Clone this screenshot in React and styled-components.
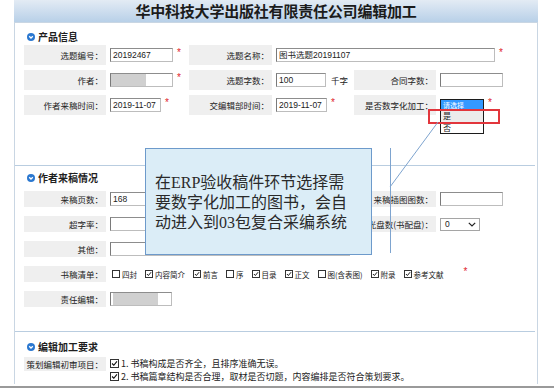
import styled, { createGlobalStyle } from "styled-components";

const CJK = `"Noto Sans CJK SC", sans-serif`;
const NUM = `"Liberation Sans", "Noto Sans CJK SC", sans-serif`;

const GlobalStyle = createGlobalStyle`
  html, body { margin: 0; padding: 0; background: #fff; }
  body { font-family: ${CJK}; color: #222; }
`;

function Dot() {
  return (
    <DotIcon viewBox="0 0 8 8">
      <circle cx="4" cy="4" r="4" fill="#2b78d0" />
      <path d="M2.2 3.3 L4 5 L5.8 3.3" stroke="#fff" strokeWidth="1.3" fill="none" />
    </DotIcon>
  );
}

function Check({ on, size = 8 }) {
  return (
    <Box $size={size}>
      {on && (
        <svg viewBox="0 0 8 8" width={size - 2} height={size - 2}>
          <path d="M1.2 4 L3.2 6 L6.8 1.6" stroke="#111" strokeWidth="1.3" fill="none" />
        </svg>
      )}
    </Box>
  );
}

const items = [
  ["四封", false], ["内容简介", true], ["前言", true], ["序", false], ["目录", true],
  ["正文", true], ["图(含表图)", false], ["附录", true], ["参考文献", true],
];

export default function App() {
  return (
    <Page>
      <GlobalStyle />
      <Frame>
        <Header>
          <Title>华中科技大学出版社有限责任公司编辑加工</Title>
        </Header>
        <Panel>
          <Section $pt={8} $pb={50}>
            <SectionTitle $mb={2}><Dot />产品信息</SectionTitle>
            <FormGrid $row={20} $gap={5}>
              <Label>选题编号：</Label>
              <Field><TextBox $w={63}>20192467</TextBox><Req>*</Req></Field>
              <Label>选题名称：</Label>
              <Field $span={3}><TextBox $w={219}>图书选题20191107</TextBox><Req>*</Req></Field>

              <Label>作者：</Label>
              <Field><TextBox $w={63}><Blur $l={0} $w={35} /></TextBox><Req>*</Req></Field>
              <Label>选题字数：</Label>
              <Field><TextBox $w={50}>100</TextBox><Unit>千字</Unit></Field>
              <Label>合同字数：</Label>
              <Field><TextBox $w={63} /></Field>

              <Label>作者来稿时间：</Label>
              <Field><TextBox $w={51}>2019-11-07</TextBox><Req>*</Req></Field>
              <Label>交编辑部时间：</Label>
              <Field><TextBox $w={51}>2019-11-07</TextBox><Req>*</Req></Field>
              <Label>是否数字化加工：</Label>
              <Field>
                <ListBox>
                  <Option $active $h={10} $size={7}>请选择</Option>
                  <Option $hover $h={11.5} $size={8}>是</Option>
                  <Option $h={11.5} $size={8}>否</Option>
                </ListBox>
                <Req $ml={48}>*</Req>
                <Marker />
              </Field>
            </FormGrid>
          </Section>
          <Divider />
          <Section $pt={6} $pb={24}>
            <SectionTitle $mb={7}><Dot />作者来稿情况</SectionTitle>
            <FormGrid $row={16} $gap={9}>
              <Label>来稿页数：</Label>
              <Field $span={3}><TextBox $w={63}>168</TextBox></Field>
              <Label>来稿插图图数：</Label>
              <Field><TextBox $w={63} /></Field>

              <Label>超字率：</Label>
              <Field $span={3}><TextBox $w={63} /></Field>
              <Label>光盘数(书配盘)：</Label>
              <Field>
                <SelectBox>
                  0
                  <svg viewBox="0 0 8 5" width="8" height="5">
                    <path d="M0.8 0.8 L4 4 L7.2 0.8" stroke="#222" strokeWidth="1.2" fill="none" />
                  </svg>
                </SelectBox>
              </Field>

              <Label>其他：</Label>
              <Field $span={5}><TextBox $w={240} /></Field>

              <Label>书稿清单：</Label>
              <Field $span={5}>
                <CheckGroup>
                  {items.map(([t, on]) => (
                    <CheckItem key={t}><Check on={on} />{t}</CheckItem>
                  ))}
                </CheckGroup>
                <Req $ml={20}>*</Req>
              </Field>

              <Label>责任编辑：</Label>
              <Field $span={5}><TextBox $w={62}><Blur $l={2} $w={45} /></TextBox></Field>
            </FormGrid>
          </Section>
          <Divider />
          <Section $pt={9} $pb={0}>
            <SectionTitle $mb={4}><Dot />编辑加工要求</SectionTitle>
            <FormGrid $row={14} $gap={0}>
              <Label>策划编辑初审项目：</Label>
              <Field $span={5} $column>
                <CheckLine><Check on size={9} />1. 书稿构成是否齐全，且排序准确无误。</CheckLine>
                <CheckLine><Check on size={9} />2. 书稿篇章结构是否合理，取材是否切题，内容编排是否符合策划要求。</CheckLine>
              </Field>
            </FormGrid>
          </Section>
        </Panel>
      </Frame>
      <BottomRule />

      <Callout>
        在ERP验收稿件环节选择需<br />
        要数字化加工的图书，会自<br />
        动进入到03包复合采编系统
      </Callout>
      <Leader viewBox="0 0 554 391" width="554" height="391">
        <line x1="438" y1="122" x2="390" y2="187" stroke="#7ea4cf" strokeWidth="1" />
        <line x1="390.5" y1="148" x2="390.5" y2="253" stroke="#7ea4cf" strokeWidth="1" />
      </Leader>
    </Page>
  );
}

const Page = styled.div`
position: relative;
width: 554px;
height: 391px;
overflow: hidden;
background: #fff;
display: flex;
flex-direction: column;
`
const Frame = styled.div`
margin-left: 14px;
width: 524px;
height: 384px;
display: flex;
flex-direction: column;
`
const Header = styled.div`
height: 22px;
flex-shrink: 0;
background: linear-gradient(#e3ebf4, #b8d0e8);
display: flex;
justify-content: center;
`
const Title = styled.div`
font-family: ${CJK};
font-weight: 700;
font-size: 15px;
line-height: 22px;
letter-spacing: -0.2px;
color: #1b1b1b;
`
const Panel = styled.div`
flex: 1;
min-height: 0;
overflow: hidden;
border: 1px solid #c9d6e3;
border-bottom: none;
`
const Section = styled.div`
padding-top: ${p => p.$pt}px;
padding-bottom: ${p => p.$pb}px;
`
const SectionTitle = styled.div`
display: flex;
align-items: center;
gap: 3px;
height: 12px;
padding-left: 12px;
margin-bottom: ${p => p.$mb}px;
font-family: ${CJK};
font-weight: 700;
font-size: 10px;
line-height: 12px;
color: #1f1f1f;
`
const DotIcon = styled.svg`
width: 8px;
height: 8px;
`
const FormGrid = styled.div`
display: grid;
grid-template-columns: 82px 75px 83px 74px 82px 1fr;
grid-auto-rows: ${p => p.$row}px;
column-gap: 4px;
row-gap: ${p => p.$gap}px;
padding-left: 9px;
`
const Label = styled.div`
background: #efefef;
display: flex;
align-items: center;
justify-content: flex-end;
padding-right: 3px;
font-family: ${CJK};
font-size: 8.5px;
color: #222;
white-space: nowrap;
`
const Field = styled.div`
position: relative;
grid-column: span ${p => p.$span || 1};
display: flex;
flex-direction: ${p => (p.$column ? "column" : "row")};
align-items: ${p => (p.$column ? "flex-start" : "center")};
`
const TextBox = styled.div`
position: relative;
box-sizing: border-box;
width: ${p => p.$w}px;
height: 14px;
padding: 0 2px;
border: 1px solid #bdbdbd;
border-top-color: #8d8d8d;
border-left-color: #7a7a7a;
background: #fff;
overflow: hidden;
font-family: ${NUM};
font-size: 8.5px;
line-height: 12px;
color: #222;
white-space: nowrap;
`
const Blur = styled.span`
position: absolute;
top: 0;
bottom: 0;
left: ${p => p.$l}px;
width: ${p => p.$w}px;
background: #d0d0d0;
`
const Req = styled.span`
margin-left: ${p => p.$ml || 4}px;
position: relative;
top: -2px;
color: #e0232b;
font-family: ${NUM};
font-size: 10px;
line-height: 10px;
`
const Unit = styled.span`
margin-left: 5px;
font-family: ${CJK};
font-size: 8.5px;
color: #222;
`
const ListBox = styled.div`
position: absolute;
left: 0;
top: 4px;
width: 44px;
box-sizing: border-box;
border: 1px solid #1c1c1c;
background: #fff;
display: flex;
flex-direction: column;
`
const Option = styled.div`
height: ${p => p.$h}px;
padding-left: 2px;
background: ${p => (p.$active ? "#3399ff" : p.$hover ? "#ececec" : "#fff")};
color: ${p => (p.$active ? "#fff" : "#222")};
font-family: ${CJK};
font-size: ${p => p.$size}px;
line-height: ${p => p.$h}px;
`
const Marker = styled.div`
position: absolute;
left: -12px;
top: 14px;
width: 72px;
height: 15px;
box-sizing: border-box;
border: 2px solid #e2363c;
`
const SelectBox = styled.div`
box-sizing: border-box;
width: 40px;
height: 13px;
border: 1px solid #a5a5a5;
display: flex;
align-items: center;
justify-content: space-between;
padding: 0 3px 0 4px;
font-family: ${NUM};
font-size: 8.5px;
color: #222;
`
const CheckGroup = styled.div`
display: flex;
align-items: center;
gap: 8px;
padding-left: 2px;
`
const CheckItem = styled.span`
display: flex;
align-items: center;
gap: 2px;
font-family: ${CJK};
font-size: 7.5px;
color: #222;
white-space: nowrap;
`
const Box = styled.span`
box-sizing: border-box;
width: ${p => p.$size}px;
height: ${p => p.$size}px;
border: 1px solid #333;
background: #fff;
display: flex;
align-items: center;
justify-content: center;
`
const CheckLine = styled.div`
height: 14px;
display: flex;
align-items: center;
gap: 2px;
font-family: ${CJK};
font-size: 9px;
color: #222;
white-space: nowrap;
`
const Divider = styled.div`
height: 1px;
margin-right: 2px;
background: #b9cde0;
`
const BottomRule = styled.div`
margin-top: 2px;
height: 2px;
background: #9a9a9a;
`
const Callout = styled.div`
position: absolute;
left: 145px;
top: 148px;
width: 227px;
height: 107px;
box-sizing: border-box;
padding: 24px 0 0 9px;
border: 1px solid #6d9acb;
background: #dbedf7;
font-family: "Liberation Serif", "Noto Sans CJK SC", serif;
font-size: 16px;
line-height: 20px;
color: #2a2a2a;
white-space: nowrap;
`
const Leader = styled.svg`
position: absolute;
left: 0;
top: 0;
pointer-events: none;
`
